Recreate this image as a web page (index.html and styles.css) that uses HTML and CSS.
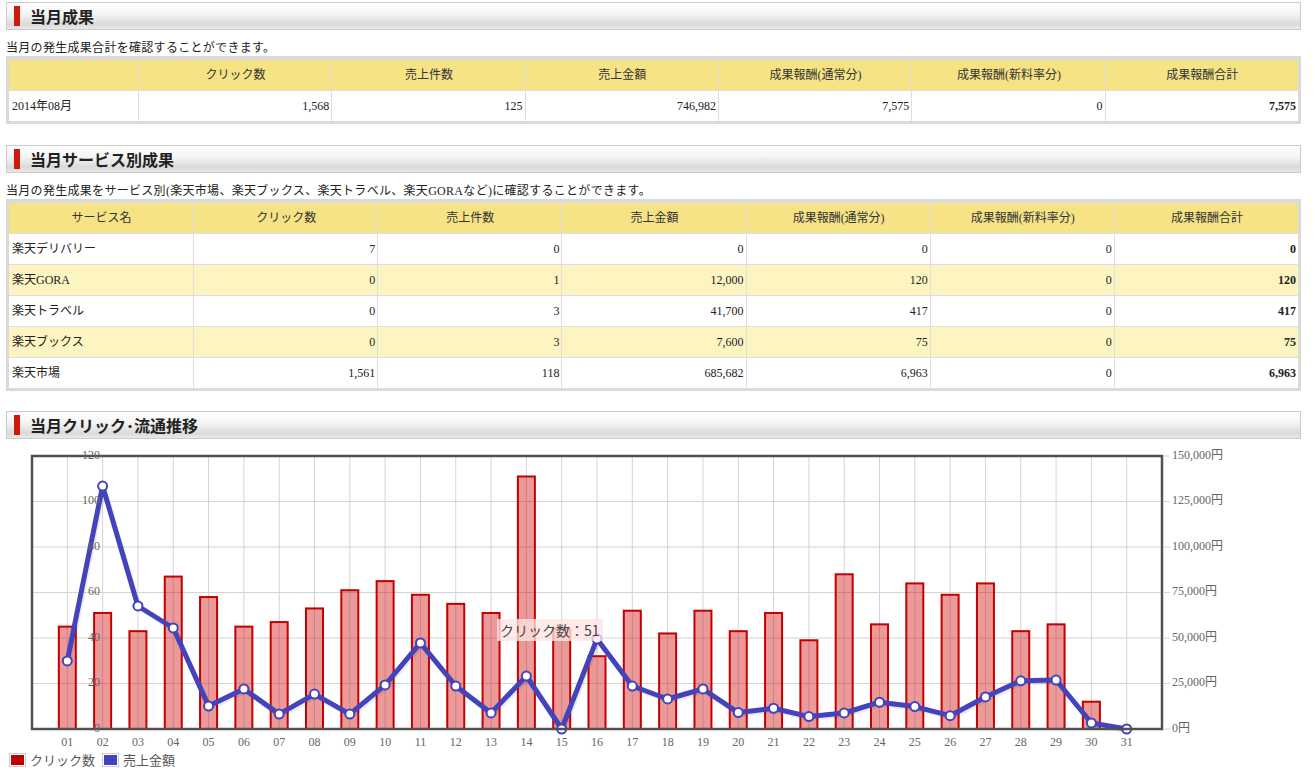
FILE: index.html
```html
<!DOCTYPE html>
<html lang="ja">
<head>
    <meta charset="UTF-8">
    <title>当月成果</title>
    <link rel="stylesheet" href="styles.css">
</head>
<body>
    <div class="page">
        <section class="section">
            <div class="section-head"><span class="mark"></span><h2>当月成果</h2></div>
            <p class="lead">当月の発生成果合計を確認することができます。</p>
            <table class="result-table summary">
                <colgroup>
                    <col class="col-first"><col><col><col><col><col><col>
                </colgroup>
                <tr>
                    <th></th>
                    <th>クリック数</th>
                    <th>売上件数</th>
                    <th>売上金額</th>
                    <th>成果報酬(通常分)</th>
                    <th>成果報酬(新料率分)</th>
                    <th>成果報酬合計</th>
                </tr>
                <tr>
                    <td>2014年08月</td>
                    <td>1,568</td>
                    <td>125</td>
                    <td>746,982</td>
                    <td>7,575</td>
                    <td>0</td>
                    <td>7,575</td>
                </tr>
            </table>
        </section>

        <section class="section">
            <div class="section-head"><span class="mark"></span><h2>当月サービス別成果</h2></div>
            <p class="lead">当月の発生成果をサービス別(楽天市場、楽天ブックス、楽天トラベル、楽天GORAなど)に確認することができます。</p>
            <table class="result-table services">
                <tr>
                    <th>サービス名</th>
                    <th>クリック数</th>
                    <th>売上件数</th>
                    <th>売上金額</th>
                    <th>成果報酬(通常分)</th>
                    <th>成果報酬(新料率分)</th>
                    <th>成果報酬合計</th>
                </tr>
                <tr>
                    <td>楽天デリバリー</td><td>7</td><td>0</td><td>0</td><td>0</td><td>0</td><td>0</td>
                </tr>
                <tr class="alt">
                    <td>楽天GORA</td><td>0</td><td>1</td><td>12,000</td><td>120</td><td>0</td><td>120</td>
                </tr>
                <tr>
                    <td>楽天トラベル</td><td>0</td><td>3</td><td>41,700</td><td>417</td><td>0</td><td>417</td>
                </tr>
                <tr class="alt">
                    <td>楽天ブックス</td><td>0</td><td>3</td><td>7,600</td><td>75</td><td>0</td><td>75</td>
                </tr>
                <tr>
                    <td>楽天市場</td><td>1,561</td><td>118</td><td>685,682</td><td>6,963</td><td>0</td><td>6,963</td>
                </tr>
            </table>
        </section>

        <section class="section section-chart">
            <div class="section-head"><span class="mark"></span><h2>当月クリック･流通推移</h2></div>
            <div class="chart">
                <svg id="chart" width="1295" height="304"></svg>
                <div class="chart-tooltip">クリック数：51</div>
            </div>
            <div class="legend">
                <span class="swatch"><i class="swatch-clicks"></i></span>
                <span class="legend-label">クリック数</span>
                <span class="swatch"><i class="swatch-sales"></i></span>
                <span class="legend-label">売上金額</span>
            </div>
        </section>
    </div>

    <script>
        (function () {
            const clicks = [45, 51, 43, 67, 58, 45, 47, 53, 61, 65, 59, 55, 51, 111, 44, 32,
                            52, 42, 52, 43, 51, 39, 68, 46, 64, 59, 64, 43, 46, 12, 0];
            const sales = [37400, 133500, 67600, 55500, 12600, 22000, 8200, 19200, 8200, 24200,
                           47300, 23600, 8800, 29100, 0, 49500, 23600, 16500, 22000, 9000,
                           11400, 6800, 8800, 14700, 12300, 7300, 17600, 26500, 26900, 3300, 0];

            const svg = document.getElementById('chart');
            const NS = 'http://www.w3.org/2000/svg';
            const plotLeft = 26, plotRight = 1156, plotTop = 10, plotBottom = 283;
            const plotW = plotRight - plotLeft, plotH = plotBottom - plotTop;
            const step = plotW / (clicks.length + 1);

            const cx = i => plotLeft + step * (i + 1);
            const yClick = v => plotBottom - v / 120 * plotH;
            const ySales = v => plotBottom - v / 150000 * plotH;

            function add(tag, attrs, text) {
                const el = document.createElementNS(NS, tag);
                for (const k in attrs) el.setAttribute(k, attrs[k]);
                if (text !== undefined) el.textContent = text;
                svg.appendChild(el);
                return el;
            }

            // grid
            for (let i = 1; i < 6; i++) {
                const y = plotTop + plotH / 6 * i;
                add('line', { x1: plotLeft, x2: plotRight, y1: y, y2: y, class: 'grid' });
            }
            clicks.forEach((v, i) => {
                add('line', { x1: cx(i), x2: cx(i), y1: plotTop, y2: plotBottom, class: 'grid' });
            });

            // bars
            clicks.forEach((v, i) => {
                const y = yClick(v);
                add('rect', { x: cx(i) - 8.5, y: y, width: 17, height: plotBottom - y, class: 'bar' });
            });

            // sales line
            const pts = sales.map((v, i) => cx(i).toFixed(1) + ',' + ySales(v).toFixed(1)).join(' ');
            add('polyline', { points: pts, class: 'line-shadow', transform: 'translate(1.5,2)' });
            add('polyline', { points: pts, class: 'line' });
            sales.forEach((v, i) => {
                add('circle', { cx: cx(i), cy: ySales(v), r: 4.5, class: 'marker' });
            });

            // frame
            add('rect', { x: plotLeft, y: plotTop, width: plotW, height: plotH, class: 'frame' });

            // axis labels
            for (let i = 0; i <= 6; i++) {
                const y = plotBottom - plotH / 6 * i;
                add('text', { x: 94, y: y, class: 'axis-label', 'text-anchor': 'end', 'dominant-baseline': 'middle' }, String(i * 20));
                add('line', { x1: plotRight + 1, x2: plotRight + 8, y1: y, y2: y, class: 'tick' });
                add('text', { x: 1166, y: y, class: 'axis-label', 'dominant-baseline': 'middle' },
                    (i * 25000).toLocaleString('en-US') + '円');
            }
            clicks.forEach((v, i) => {
                const day = String(i + 1).padStart(2, '0');
                add('text', { x: cx(i), y: 297, class: 'axis-label', 'text-anchor': 'middle', 'dominant-baseline': 'middle' }, day);
            });
        })();
    </script>
</body>
</html>
```

FILE: styles.css
```css
body {
    margin: 0;
    font-family: "Liberation Serif", "Noto Sans CJK JP", serif;
    font-size: 12px;
    color: #222;
    background-color: #fff;
}
.page {
    padding: 2px 14px 0 6px;
}
.section + .section {
    margin-top: 21px;
}
.section-chart {
    margin-top: 20px !important;
}
.section-head {
    height: 26px;
    border: 1px solid #cbcbcb;
    background: linear-gradient(to bottom, #ffffff 0%, #f5f5f5 40%, #dadada 82%, #e9e9e9 100%);
    display: flex;
    align-items: center;
    padding-left: 7px;
}
.section-head .mark {
    width: 6px;
    height: 20px;
    background-color: #cc1a0c;
    margin-right: 10px;
}
.section-head h2 {
    margin: 0;
    font: bold 16px/26px "Noto Sans CJK JP", sans-serif;
    color: #222;
}
.lead {
    margin: 10px 0 0;
    line-height: 16px;
    letter-spacing: 0.3px;
}
.result-table {
    width: 100%;
    table-layout: fixed;
    border-collapse: separate;
    border-spacing: 0;
    border: 3px solid #dadada;
}
.summary col.col-first {
    width: 10%;
}
.result-table th,
.result-table td {
    padding: 7px 2px 7px 3px;
    line-height: 16px;
    border-top: 1px solid #dedede;
    border-left: 1px solid #dedede;
    white-space: nowrap;
    overflow: hidden;
}
.result-table th:first-child,
.result-table td:first-child {
    border-left: none;
}
.result-table th {
    background-color: #f5e386;
    font-weight: normal;
    text-align: center;
    color: #333;
}
.result-table td {
    text-align: right;
    background-color: #fff;
}
.result-table td:first-child {
    text-align: left;
}
.result-table td:last-child {
    font-weight: bold;
}
.result-table tr.alt td {
    background-color: #fcf5c1;
}

/* chart */
.chart {
    position: relative;
    margin-top: 7px;
    height: 304px;
}
.chart svg {
    display: block;
}
.chart .grid {
    stroke: #d4d4d4;
    stroke-width: 1;
}
.chart .bar {
    fill: rgba(204, 0, 0, 0.4);
    stroke: #c40000;
    stroke-width: 2;
}
.chart .line {
    fill: none;
    stroke: #4343bb;
    stroke-width: 5;
    stroke-linejoin: round;
}
.chart .line-shadow {
    fill: none;
    stroke: rgba(0, 0, 0, 0.08);
    stroke-width: 5;
    stroke-linejoin: round;
}
.chart .marker {
    fill: #fff;
    stroke: #4343bb;
    stroke-width: 2;
}
.chart .frame {
    fill: none;
    stroke: #505050;
    stroke-width: 2.5;
}
.chart .tick {
    stroke: #d4d4d4;
    stroke-width: 1;
}
.chart .axis-label {
    font-family: "Liberation Serif", "Noto Sans CJK JP", serif;
    font-size: 12px;
    fill: #666;
}
.chart-tooltip {
    position: absolute;
    left: 491px;
    top: 173px;
    padding: 1px 3px;
    font: 14px/20px "Noto Sans CJK JP", sans-serif;
    color: #444;
    background-color: rgba(255, 228, 228, 0.78);
    white-space: nowrap;
}
.legend {
    display: flex;
    align-items: center;
    margin-top: 2px;
    padding-left: 3px;
    font: 13px/16px "Noto Sans CJK JP", sans-serif;
    color: #555;
}
.swatch {
    display: inline-block;
    border: 1px solid #ccc;
    padding: 1px;
    margin-right: 4px;
}
.swatch i {
    display: block;
    width: 13px;
    height: 10px;
}
.swatch-clicks {
    background-color: #c00000;
}
.swatch-sales {
    background-color: #4343bb;
}
.legend-label {
    margin-right: 7px;
}
```
